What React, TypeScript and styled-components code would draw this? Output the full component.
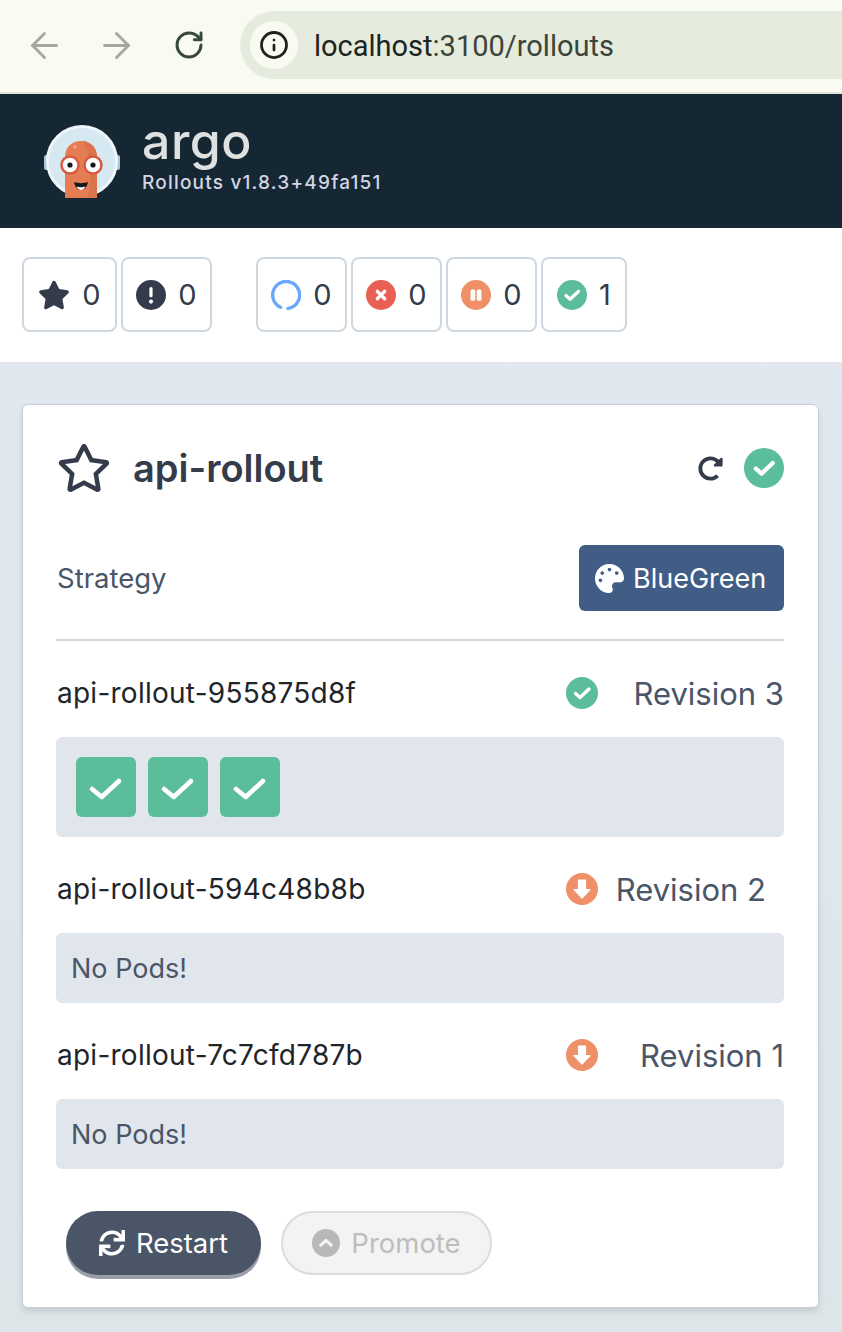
import * as React from 'react';
import styled, { createGlobalStyle } from 'styled-components';
import { ArrowLeft, ArrowRight, Info, RotateCw } from 'lucide-react';
import { FaPalette, FaRedoAlt, FaRegStar, FaStar, FaSync } from 'react-icons/fa';

const GREEN = '#5bbd9a';
const ORANGE = '#f09068';
const RED = '#e85f53';
const INK = '#343b4a';

const GlobalStyle = createGlobalStyle`
  html, body {
    margin: 0;
    padding: 0;
    background: #dde5e9;
  }
  * {
    box-sizing: border-box;
  }
  body {
    font-family: Inter, "Liberation Sans", sans-serif;
  }
`;

const ChromeBar = styled.div`
  display: flex;
  align-items: center;
  height: 94px;
  padding: 12px 0 14px 24px;
  background: #f9fbf2;
  border-bottom: 2px solid #dfe5d6;
`;

const NavIcons = styled.div`
  display: flex;
  align-items: center;
  gap: 31px;
  width: 216px;
  flex: none;
`;

const NavIcon = styled.span<{ $dim?: boolean }>`
  display: flex;
  justify-content: center;
  width: 41px;
  color: ${(p) => (p.$dim ? '#a4a8a0' : '#37483a')};
`;

const UrlPill = styled.div`
  display: flex;
  align-items: center;
  flex: 1;
  height: 68px;
  padding-left: 10px;
  background: #e6ecdd;
  border-radius: 34px 0 0 34px;
`;

const InfoBadge = styled.span`
  display: flex;
  align-items: center;
  justify-content: center;
  width: 48px;
  height: 48px;
  border-radius: 50%;
  background: #f9fbf2;
  color: #1c211b;
`;

const UrlText = styled.span`
  margin: 1px 0 0 16px;
  font-family: Roboto, Inter, sans-serif;
  font-size: 29px;
  color: #20241f;
`;

const UrlHost = styled.span`
  color: #3c4439;
`;

const Header = styled.header`
  display: flex;
  align-items: center;
  height: 134px;
  padding-left: 44px;
  background: #152733;
`;

const Brand = styled.div`
  display: flex;
  flex-direction: column;
  margin-left: 22px;
  margin-top: -12px;
`;

const Wordmark = styled.span`
  font-size: 50px;
  line-height: 50px;
  font-weight: 550;
  letter-spacing: 0.5px;
  color: #dfe0e0;
`;

const Version = styled.span`
  margin-top: 6px;
  font-size: 19px;
  line-height: 22px;
  font-weight: 500;
  letter-spacing: 1.2px;
  color: #d4d4e4;
`;

const FilterBar = styled.div`
  display: flex;
  align-items: flex-start;
  height: 134px;
  padding: 29px 0 0 22px;
  background: #fff;
`;

const FilterGroup = styled.div`
  display: flex;
  gap: 4px;

  & + & {
    margin-left: 44px;
  }
`;

const StatBox = styled.div<{ $width: number }>`
  display: flex;
  align-items: center;
  justify-content: center;
  gap: 12px;
  width: ${(p) => p.$width}px;
  height: 75px;
  border: 2px solid #cfd7e1;
  border-radius: 8px;
  font-size: 29px;
  color: ${INK};
`;

const Page = styled.main`
  padding: 42px 23px 24px 22px;
  background: linear-gradient(#e2e8f0, #dde5e9);
`;

const Card = styled.section`
  display: flex;
  flex-direction: column;
  height: 904px;
  padding: 38px 34px 0 33px;
  background: #fff;
  border: 1px solid #c6ced9;
  border-radius: 6px;
  box-shadow: 0 4px 6px rgba(0, 0, 0, 0.1);
`;

const TitleRow = styled.div`
  display: flex;
  align-items: center;
  height: 50px;
  padding-left: 1px;
  color: ${INK};
`;

const Title = styled.h1`
  margin: 0 0 0 22px;
  flex: 1;
  font-size: 38px;
  font-weight: 600;
  color: ${INK};
`;

const StatusGroup = styled.div`
  display: flex;
  align-items: center;
  gap: 21px;
`;

const StrategyRow = styled.div`
  display: flex;
  align-items: center;
  justify-content: space-between;
  margin-top: 52px;
  padding-left: 1px;
  font-size: 27.5px;
  color: #4a5568;
`;

const StrategyTag = styled.div`
  display: flex;
  align-items: center;
  gap: 9px;
  width: 205px;
  height: 66px;
  padding-left: 16px;
  background: #425d85;
  border-radius: 6px;
  font-size: 27px;
  color: #fff;
`;

const Divider = styled.hr`
  width: 100%;
  height: 2px;
  margin: 28px 0 0;
  border: 0;
  background: #cfd7e1;
`;

const RevisionRow = styled.div`
  display: flex;
  align-items: center;
  justify-content: space-between;
  height: 40px;
  margin-top: 32px;
  padding-left: 1px;
`;

const SetName = styled.span`
  font-size: 28px;
  letter-spacing: 0.25px;
  color: #212529;
`;

const RevisionCell = styled.div<{ $inset: number }>`
  display: flex;
  align-items: center;
  justify-content: space-between;
  width: 218px;
  padding-right: ${(p) => p.$inset}px;
`;

const RevisionLabel = styled.span`
  font-size: 31px;
  color: #4a5568;
`;

const PodTray = styled.div`
  display: flex;
  align-items: center;
  gap: 12px;
  height: 100px;
  margin-top: 24px;
  padding-left: 20px;
  background: #e1e6ed;
  border-radius: 6px;
`;

const Pod = styled.div`
  display: flex;
  width: 60px;
  height: 60px;
  border-radius: 6px;
  background: ${GREEN};
`;

const EmptyTray = styled.div`
  display: flex;
  align-items: center;
  height: 70px;
  margin-top: 24px;
  padding-left: 15px;
  background: #e1e6ed;
  border-radius: 6px;
  font-size: 27px;
  color: #4a5568;
`;

const Actions = styled.div`
  display: flex;
  gap: 20px;
  margin-top: 42px;
  padding-left: 10px;
`;

const ActionButton = styled.button<{ $disabled?: boolean }>`
  display: flex;
  align-items: center;
  justify-content: center;
  gap: 11px;
  width: ${(p) => (p.$disabled ? 211 : 195)}px;
  height: 64px;
  padding: 0;
  border-radius: 32px;
  font-family: inherit;
  font-size: 27.5px;
  border: ${(p) => (p.$disabled ? '2px solid #dcdcdc' : '0')};
  background: ${(p) => (p.$disabled ? '#f3f3f3' : '#4a5568')};
  color: ${(p) => (p.$disabled ? '#bdbdbd' : '#fff')};
  box-shadow: ${(p) => (p.$disabled ? 'none' : '0 4px 0 #9a9ea8')};
`;

type Glyph = 'check' | 'cross' | 'pause' | 'alert' | 'down' | 'up';

const glyphs: Record<Glyph, (ink: string) => React.ReactNode> = {
  check: (ink) => <path d="M9.5 16.5l4.5 4 9-8.5" fill="none" stroke={ink} strokeWidth="3.4" strokeLinecap="round" strokeLinejoin="round" />,
  cross: (ink) => <path d="M12 12l8 8M20 12l-8 8" fill="none" stroke={ink} strokeWidth="3.4" strokeLinecap="round" />,
  pause: (ink) => (
    <>
      <rect x="10.2" y="10" width="5" height="12" rx="1.6" fill={ink} />
      <rect x="16.8" y="10" width="5" height="12" rx="1.6" fill={ink} />
    </>
  ),
  alert: (ink) => (
    <>
      <rect x="14.3" y="7.5" width="3.4" height="11" rx="1.7" fill={ink} />
      <circle cx="16" cy="23" r="2.2" fill={ink} />
    </>
  ),
  down: (ink) => <path d="M12.5 7h7v9.5H24L16 25l-8-8.5h4.5z" fill={ink} stroke={ink} strokeWidth="1.2" strokeLinejoin="round" />,
  up: (ink) => <path d="M10 18.5l6-5.5 6 5.5" fill="none" stroke={ink} strokeWidth="3.6" strokeLinecap="round" strokeLinejoin="round" />,
};

const StatusDot: React.FC<{ glyph: Glyph; size: number; color: string; ink?: string }> = ({
  glyph,
  size,
  color,
  ink = '#fff',
}) => (
  <svg width={size} height={size} viewBox="0 0 32 32">
    <circle cx="16" cy="16" r="16" fill={color} />
    {glyphs[glyph](ink)}
  </svg>
);

const Spinner = () => (
  <svg width="30" height="30" viewBox="0 0 30 30" fill="none" stroke="#6aa8fb" strokeWidth="3.4" strokeLinecap="round">
    <path d="M9.5 27.3A13.5 13.5 0 1 1 17 28.4" />
  </svg>
);

const PodCheck = () => (
  <svg width="60" height="60" viewBox="0 0 60 60">
    <path d="M16 32l9.7 8L43 24" fill="none" stroke="#fff" strokeWidth="4.6" strokeLinecap="round" strokeLinejoin="round" />
  </svg>
);

const Logo = () => (
  <svg width="76" height="74" viewBox="0 0 76 74">
    <rect x="0" y="31" width="6" height="15" rx="2" fill="#a9c6dd" />
    <rect x="70" y="31" width="6" height="15" rx="2" fill="#a9c6dd" />
    <circle cx="38" cy="37" r="34.5" fill="#d6e8f1" stroke="#eef6fb" strokeWidth="3" />
    <path d="M21 74V33C21 23 28 17 37 17s16 6 16 16v41z" fill="#e67d52" />
    <path d="M39 17c8 1 14 7 14 16v41H44c4-18 3-42-5-57z" fill="#d9744c" />
    <circle cx="31" cy="23" r="1.8" fill="#f2a685" />
    <circle cx="26" cy="41" r="8.5" fill="#fff" stroke="#d9583f" strokeWidth="2.5" />
    <circle cx="49" cy="41" r="8.5" fill="#fff" stroke="#d9583f" strokeWidth="2.5" />
    <circle cx="26" cy="41" r="2.6" fill="#14181c" />
    <circle cx="49" cy="41" r="2.6" fill="#14181c" />
    <path d="M30 58c4 1.5 10 1.5 14 0-1 5-3.500 8-7 8s-6-3-7-8z" fill="#14181c" />
    <path d="M32.500 62.500c2 1 7 1 9 0-1 2-2.500 3.500-4.500 3.500s-3.500-1.500-4.500-3.500z" fill="#fff" />
  </svg>
);

const revisions = [
  { name: 'api-rollout-594c48b8b', label: 'Revision 2', inset: 18 },
  { name: 'api-rollout-7c7cfd787b', label: 'Revision 1', inset: 0 },
];

const App: React.FC = () => (
  <>
    <GlobalStyle />
    <ChromeBar>
      <NavIcons>
        <NavIcon $dim>
          <ArrowLeft size={41} strokeWidth={1.7} />
        </NavIcon>
        <NavIcon $dim>
          <ArrowRight size={41} strokeWidth={1.7} />
        </NavIcon>
        <NavIcon>
          <RotateCw size={32} strokeWidth={2.2} />
        </NavIcon>
      </NavIcons>
      <UrlPill>
        <InfoBadge>
          <Info size={30} strokeWidth={2.2} />
        </InfoBadge>
        <UrlText>
          localhost<UrlHost>:3100/rollouts</UrlHost>
        </UrlText>
      </UrlPill>
    </ChromeBar>
    <Header>
      <Logo />
      <Brand>
        <Wordmark>argo</Wordmark>
        <Version>Rollouts v1.8.3+49fa151</Version>
      </Brand>
    </Header>
    <FilterBar>
      <FilterGroup>
        <StatBox $width={95}>
          <FaStar size={32} color={INK} />0
        </StatBox>
        <StatBox $width={91}>
          <StatusDot glyph="alert" size={30} color={INK} />0
        </StatBox>
      </FilterGroup>
      <FilterGroup>
        <StatBox $width={91}>
          <Spinner />0
        </StatBox>
        <StatBox $width={91}>
          <StatusDot glyph="cross" size={30} color={RED} />0
        </StatBox>
        <StatBox $width={91}>
          <StatusDot glyph="pause" size={30} color={ORANGE} />0
        </StatBox>
        <StatBox $width={86}>
          <StatusDot glyph="check" size={30} color={GREEN} />1
        </StatBox>
      </FilterGroup>
    </FilterBar>
    <Page>
      <Card>
        <TitleRow>
          <FaRegStar size={54} />
          <Title>api-rollout</Title>
          <StatusGroup>
            <FaRedoAlt size={25} />
            <StatusDot glyph="check" size={40} color={GREEN} />
          </StatusGroup>
        </TitleRow>
        <StrategyRow>
          Strategy
          <StrategyTag>
            <FaPalette size={29} />
            BlueGreen
          </StrategyTag>
        </StrategyRow>
        <Divider />
        <RevisionRow>
          <SetName>api-rollout-955875d8f</SetName>
          <RevisionCell $inset={0}>
            <StatusDot glyph="check" size={32} color={GREEN} />
            <RevisionLabel>Revision 3</RevisionLabel>
          </RevisionCell>
        </RevisionRow>
        <PodTray>
          {[0, 1, 2].map((i) => (
            <Pod key={i}>
              <PodCheck />
            </Pod>
          ))}
        </PodTray>
        {revisions.map((r) => (
          <React.Fragment key={r.name}>
            <RevisionRow>
              <SetName>{r.name}</SetName>
              <RevisionCell $inset={r.inset}>
                <StatusDot glyph="down" size={32} color={ORANGE} />
                <RevisionLabel>{r.label}</RevisionLabel>
              </RevisionCell>
            </RevisionRow>
            <EmptyTray>No Pods!</EmptyTray>
          </React.Fragment>
        ))}
        <Actions>
          <ActionButton>
            <FaSync size={26} />
            Restart
          </ActionButton>
          <ActionButton $disabled>
            <StatusDot glyph="up" size={28} color="#b8b8b8" ink="#f3f3f3" />
            Promote
          </ActionButton>
        </Actions>
      </Card>
    </Page>
  </>
);

export default App;
